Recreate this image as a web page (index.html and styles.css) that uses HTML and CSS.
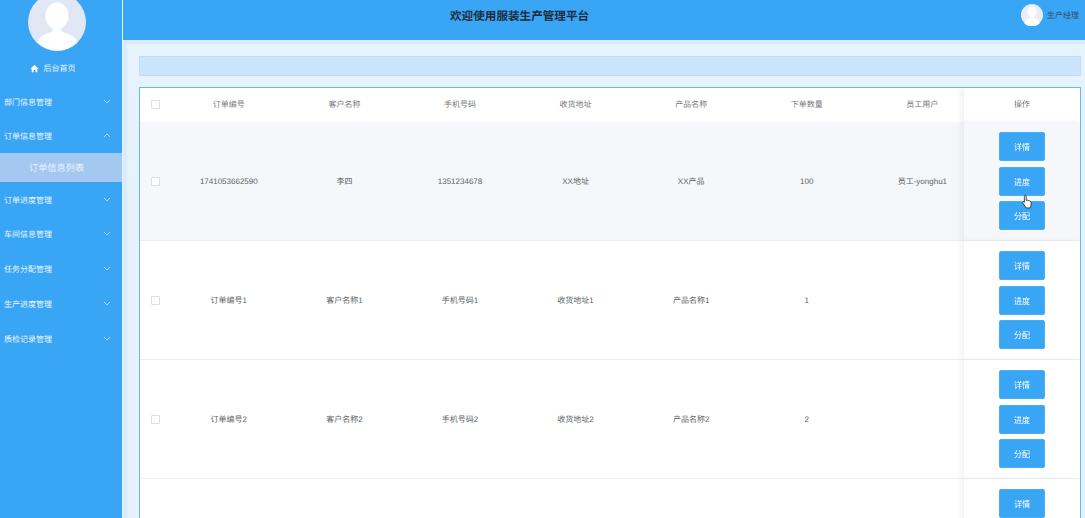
FILE: index.html
```html
<!DOCTYPE html>
<html lang="zh-CN">

<head>
    <meta charset="UTF-8">
    <title>服装生产管理平台</title>
    <link rel="stylesheet" href="styles.css">
</head>

<body>
    <div class="layout">
        <aside class="sidebar">
            <div class="avatar-wrap">
                <svg class="avatar" viewBox="0 0 58 58">
                    <circle cx="29" cy="29" r="29" fill="#e1e8f3" />
                    <ellipse cx="29" cy="23" rx="11.5" ry="13.5" fill="#fff" />
                    <path d="M10 50c0-6 6-9 14-11l1-4h8l1 4c8 2 15 5 15 11a29 29 0 0 1-39 0z" fill="#fff" />
                </svg>
            </div>
            <a class="home-link">
                <svg class="home-icon" viewBox="0 0 12 12">
                    <path d="M6 1 .5 6.2h1.7V11h2.6V7.6h2.4V11h2.6V6.2h1.7z" fill="#fff" />
                </svg>
                后台首页
            </a>
            <ul class="menu">
                <li class="menu-item">部门信息管理<svg class="chevron" viewBox="0 0 8 5"><path d="M1 1l3 3 3-3" /></svg></li>
                <li class="menu-item open">订单信息管理<svg class="chevron" viewBox="0 0 8 5"><path d="M1 4l3-3 3 3" /></svg></li>
                <li class="submenu-item">订单信息列表</li>
                <li class="menu-item">订单进度管理<svg class="chevron" viewBox="0 0 8 5"><path d="M1 1l3 3 3-3" /></svg></li>
                <li class="menu-item">车间信息管理<svg class="chevron" viewBox="0 0 8 5"><path d="M1 1l3 3 3-3" /></svg></li>
                <li class="menu-item">任务分配管理<svg class="chevron" viewBox="0 0 8 5"><path d="M1 1l3 3 3-3" /></svg></li>
                <li class="menu-item">生产进度管理<svg class="chevron" viewBox="0 0 8 5"><path d="M1 1l3 3 3-3" /></svg></li>
                <li class="menu-item">质检记录管理<svg class="chevron" viewBox="0 0 8 5"><path d="M1 1l3 3 3-3" /></svg></li>
            </ul>
        </aside>

        <div class="main">
            <header class="topbar">
                <h1 class="title">欢迎使用服装生产管理平台</h1>
                <div class="user">
                    <svg class="user-avatar" viewBox="0 0 22 22">
                        <circle cx="11" cy="11" r="11" fill="#e9eef6" />
                        <ellipse cx="11" cy="8" rx="4.4" ry="5.2" fill="#fff" />
                        <path d="M3.5 19.5c0-4 3-5 6-6h3c3 1 6 2 6 6a11 11 0 0 1-15 0z" fill="#fff" />
                    </svg>
                    <span class="user-name">生产经理</span>
                </div>
            </header>

            <div class="content">
                <div class="panel">
                    <div class="filter-bar"></div>
                    <div class="table-box">
                        <table class="data-table">
                            <colgroup>
                                <col class="col-check">
                                <col span="7" class="col-data">
                                <col class="col-action">
                            </colgroup>
                            <thead>
                                <tr>
                                    <th><span class="checkbox"></span></th>
                                    <th>订单编号</th>
                                    <th>客户名称</th>
                                    <th>手机号码</th>
                                    <th>收货地址</th>
                                    <th>产品名称</th>
                                    <th>下单数量</th>
                                    <th>员工用户</th>
                                    <th class="action-cell">操作</th>
                                </tr>
                            </thead>
                            <tbody>
                                <tr class="hover-row">
                                    <td><span class="checkbox"></span></td>
                                    <td>1741053662590</td>
                                    <td>李四</td>
                                    <td>1351234678</td>
                                    <td>XX地址</td>
                                    <td>XX产品</td>
                                    <td>100</td>
                                    <td>员工-yonghu1</td>
                                    <td class="action-cell">
                                        <button class="btn">详情</button>
                                        <button class="btn">进度</button>
                                        <button class="btn">分配</button>
                                    </td>
                                </tr>
                                <tr>
                                    <td><span class="checkbox"></span></td>
                                    <td>订单编号1</td>
                                    <td>客户名称1</td>
                                    <td>手机号码1</td>
                                    <td>收货地址1</td>
                                    <td>产品名称1</td>
                                    <td>1</td>
                                    <td></td>
                                    <td class="action-cell">
                                        <button class="btn">详情</button>
                                        <button class="btn">进度</button>
                                        <button class="btn">分配</button>
                                    </td>
                                </tr>
                                <tr>
                                    <td><span class="checkbox"></span></td>
                                    <td>订单编号2</td>
                                    <td>客户名称2</td>
                                    <td>手机号码2</td>
                                    <td>收货地址2</td>
                                    <td>产品名称2</td>
                                    <td>2</td>
                                    <td></td>
                                    <td class="action-cell">
                                        <button class="btn">详情</button>
                                        <button class="btn">进度</button>
                                        <button class="btn">分配</button>
                                    </td>
                                </tr>
                                <tr class="cut-row">
                                    <td></td>
                                    <td></td>
                                    <td></td>
                                    <td></td>
                                    <td></td>
                                    <td></td>
                                    <td></td>
                                    <td></td>
                                    <td class="action-cell">
                                        <button class="btn">详情</button>
                                    </td>
                                </tr>
                            </tbody>
                        </table>
                    </div>
                </div>
            </div>
        </div>
    </div>

    <!-- mouse pointer caught in the screenshot -->
    <svg class="pointer" viewBox="0 0 12 16">
        <path d="M3.5 1.2c.7 0 1.1.5 1.1 1.1v4.4l.9-.2 1 .2 1 .3 1 .4c.8.3 1.5 1 1.5 2v2.5L9 15H4.5L1 9.8c-.4-.6-.2-1.2.3-1.5.5-.2 1 0 1.3.4V2.3c0-.6.3-1.1.9-1.1z" fill="#fff" stroke="#222" stroke-width=".9" />
    </svg>
</body>

</html>
```

FILE: styles.css
```css
* {
    box-sizing: border-box;
}

html,
body {
    margin: 0;
    padding: 0;
    height: 100%;
    overflow: hidden;
}

body {
    font-family: "Liberation Sans", "Noto Sans CJK SC", sans-serif;
    font-size: 8px;
    color: #606266;
    background-color: #e6f2fe;
    text-rendering: geometricPrecision;
}

.layout {
    display: flex;
    height: 518px;
}

/* sidebar */
.sidebar {
    width: 123px;
    flex-shrink: 0;
    background-color: #38a5f5;
    border-right: 1px solid #e4f0fc;
    color: #eef6fe;
    overflow: hidden;
}

.avatar-wrap {
    display: flex;
    justify-content: center;
    margin-top: -7px;
    padding-right: 8px;
}

.avatar {
    width: 58px;
    height: 58px;
}

.home-link {
    display: flex;
    align-items: center;
    justify-content: center;
    gap: 5px;
    height: 14px;
    margin-top: 10px;
    padding-right: 17px;
    font-size: 8px;
}

.home-icon {
    width: 9px;
    height: 9px;
}

.menu {
    list-style: none;
    margin: 10px 0 0;
    padding: 0;
}

.menu-item {
    display: flex;
    align-items: center;
    justify-content: space-between;
    height: 34.8px;
    padding: 0 11px 0 4px;
    font-size: 8px;
}

.menu-item.open {
    height: 33px;
}

.chevron {
    width: 8px;
    height: 5px;
    margin-top: -2px;
    fill: none;
    stroke: #cfe6fb;
    stroke-width: 0.8;
}

.submenu-item {
    height: 29px;
    line-height: 30px;
    margin-bottom: 1px;
    padding-left: 29px;
    font-size: 9.2px;
    color: #e8f2fc;
    background-color: #a3c9f1;
}

/* top bar */
.main {
    flex: 1;
    min-width: 0;
    display: flex;
    flex-direction: column;
}

.topbar {
    position: relative;
    height: 40px;
    flex-shrink: 0;
    display: flex;
    align-items: center;
    justify-content: flex-end;
    padding-right: 6px;
    background-color: #38a5f5;
}

.title {
    margin: 0;
    position: absolute;
    left: 327px;
    top: 9px;
    font-size: 11.6px;
    line-height: 16px;
    font-weight: bold;
    color: #1f2d3d;
}

.user {
    display: flex;
    align-items: center;
    gap: 4px;
    margin-top: -10px;
}

.user-avatar {
    width: 22px;
    height: 22px;
}

.user-name {
    font-size: 8px;
    color: #33506a;
}

/* content */
.content {
    flex: 1;
    min-height: 0;
    padding: 4px 0 0 4px;
    background-color: #d9ebfc;
}

.panel {
    height: 100%;
    padding: 12px 4px 0 12px;
    background-color: #e6f2fe;
}

.filter-bar {
    height: 20px;
    background-color: #cae4fb;
    border: 1px solid #c4dcf2;
}

/* table is wider than its box, the action column sticks to the right edge */
.table-box {
    height: 431px;
    margin-top: 11px;
    overflow: hidden;
    background-color: #fff;
    border: 1px solid #5cbdee;
    border-bottom: none;
}

.data-table {
    width: 956px;
    table-layout: fixed;
    border-collapse: separate;
    border-spacing: 0;
}

.col-check {
    width: 31px;
}

.col-data {
    width: 115.6px;
}

.col-action {
    width: 116px;
}

.data-table th {
    height: 34px;
    padding: 0 0 2px;
    font-weight: normal;
    color: #77797e;
    text-align: center;
    background-color: #fff;
}

.data-table td {
    height: 119px;
    padding: 0;
    text-align: center;
    background-color: #fff;
    border-bottom: 1px solid #ebeef5;
}

.data-table .hover-row td {
    background-color: #f5f7fa;
}

.data-table .action-cell {
    position: sticky;
    right: 0;
    box-shadow: -3px 0 5px rgba(0, 0, 0, 0.06);
}

.checkbox {
    display: inline-block;
    width: 9px;
    height: 9px;
    vertical-align: middle;
    background-color: #fff;
    border: 1px solid #dcdfe6;
    border-radius: 1px;
}

.btn {
    display: block;
    width: 46px;
    height: 29px;
    margin: 0 auto 5.5px;
    padding: 0;
    font-family: inherit;
    font-size: 8px;
    color: #fff;
    background-color: #38a5f5;
    border: 1px solid #4aaef5;
    border-radius: 2px;
}

.btn:last-child {
    margin-bottom: 0;
}

/* last row only peeks into the frame, its first button starts like the others */
.cut-row td {
    vertical-align: top;
    padding-top: 10px;
}

.pointer {
    position: absolute;
    left: 1022px;
    top: 194px;
    width: 11px;
    height: 15px;
}
```
